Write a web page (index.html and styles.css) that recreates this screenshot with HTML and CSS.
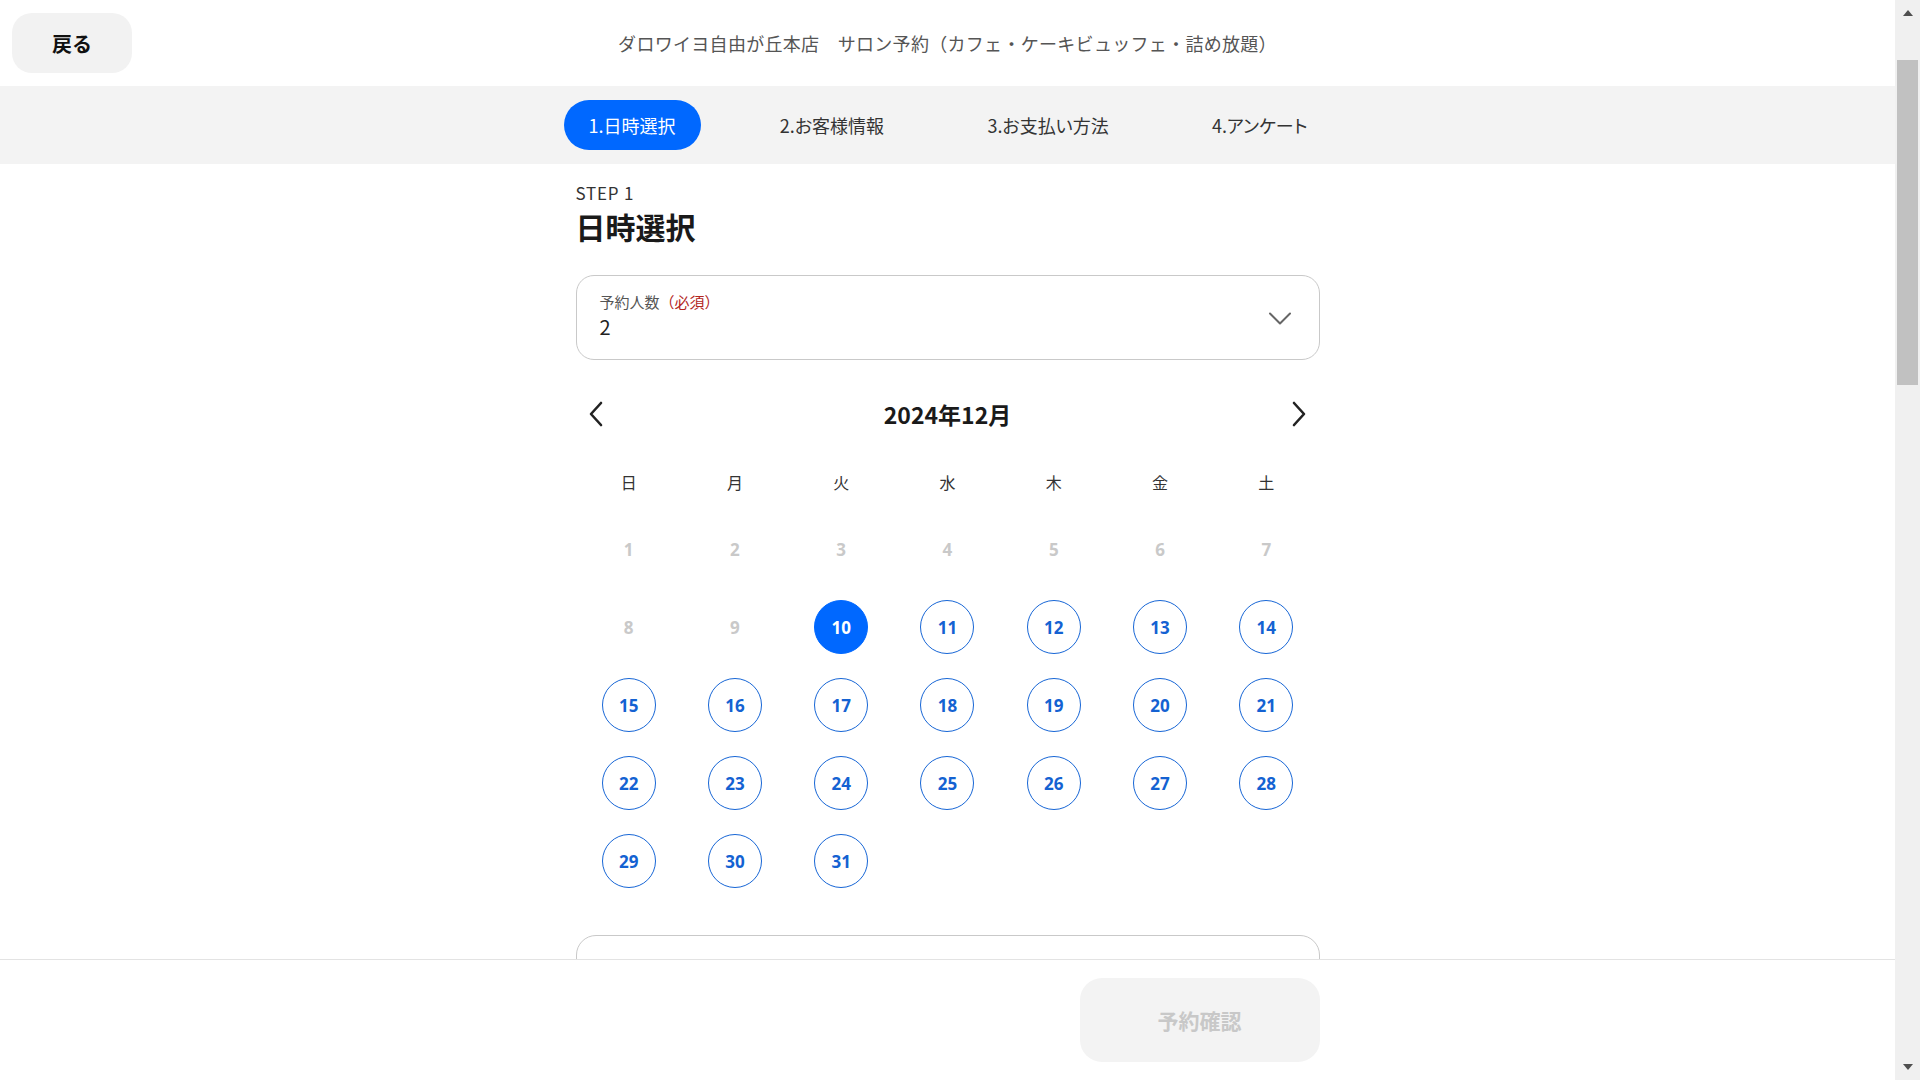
FILE: index.html
```html
<!DOCTYPE html>
<html lang="ja">
<head>
<meta charset="utf-8">
<title>サロン予約</title>
<link rel="stylesheet" href="styles.css">
</head>
<body>
<div class="app">
  <div class="page">
    <div class="scroll-area">
      <header class="topbar">
        <div class="topbar-left"><button class="back-btn" type="button">戻る</button></div>
        <h1 class="shop-title">ダロワイヨ自由が丘本店　サロン予約（カフェ・ケーキビュッフェ・詰め放題）</h1>
        <div class="topbar-right"></div>
      </header>

      <nav class="steps">
        <ol class="steps-list">
          <li class="step is-active">1.日時選択</li>
          <li class="step">2.お客様情報</li>
          <li class="step">3.お支払い方法</li>
          <li class="step">4.アンケート</li>
        </ol>
      </nav>

      <main class="content">
        <p class="step-no">STEP 1</p>
        <h2 class="step-title">日時選択</h2>

        <div class="field">
          <div class="field-body">
            <span class="field-label">予約人数<span class="req">（必須）</span></span>
            <span class="field-value">2</span>
          </div>
          <svg class="field-chevron" width="24" height="15" viewBox="0 0 24 15" aria-hidden="true">
            <path d="M2 2.5 L12 12.5 L22 2.5" fill="none" stroke="#666" stroke-width="2" stroke-linecap="round" stroke-linejoin="round"/>
          </svg>
        </div>

        <section class="calendar">
          <div class="cal-head">
            <button class="cal-nav" type="button" aria-label="前の月">
              <svg width="16" height="26" viewBox="0 0 16 26"><path d="M13 2 L3 13 L13 24" fill="none" stroke="#222" stroke-width="2.6" stroke-linecap="round" stroke-linejoin="round"/></svg>
            </button>
            <h3 class="cal-month">2024年12月</h3>
            <button class="cal-nav" type="button" aria-label="次の月">
              <svg width="16" height="26" viewBox="0 0 16 26"><path d="M3 2 L13 13 L3 24" fill="none" stroke="#222" stroke-width="2.6" stroke-linecap="round" stroke-linejoin="round"/></svg>
            </button>
          </div>
          <div class="cal-weekdays">
            <span>日</span><span>月</span><span>火</span><span>水</span><span>木</span><span>金</span><span>土</span>
          </div>
          <div class="cal-days">
            <span class="day is-disabled">1</span>
            <span class="day is-disabled">2</span>
            <span class="day is-disabled">3</span>
            <span class="day is-disabled">4</span>
            <span class="day is-disabled">5</span>
            <span class="day is-disabled">6</span>
            <span class="day is-disabled">7</span>
            <span class="day is-disabled">8</span>
            <span class="day is-disabled">9</span>
            <span class="day is-selected">10</span>
            <span class="day">11</span>
            <span class="day">12</span>
            <span class="day">13</span>
            <span class="day">14</span>
            <span class="day">15</span>
            <span class="day">16</span>
            <span class="day">17</span>
            <span class="day">18</span>
            <span class="day">19</span>
            <span class="day">20</span>
            <span class="day">21</span>
            <span class="day">22</span>
            <span class="day">23</span>
            <span class="day">24</span>
            <span class="day">25</span>
            <span class="day">26</span>
            <span class="day">27</span>
            <span class="day">28</span>
            <span class="day">29</span>
            <span class="day">30</span>
            <span class="day">31</span>
          </div>
        </section>

        <div class="panel"></div>
      </main>
    </div>

    <footer class="footer">
      <div class="footer-inner">
        <button class="confirm-btn" type="button" disabled>予約確認</button>
      </div>
    </footer>
  </div>

  <div class="scrollbar" aria-hidden="true">
    <div class="sb-btn sb-up"><span class="sb-arrow-up"></span></div>
    <div class="sb-track"><div class="sb-thumb"></div></div>
    <div class="sb-btn sb-down"><span class="sb-arrow-down"></span></div>
  </div>
</div>
</body>
</html>
```

FILE: styles.css
```css
* { box-sizing: border-box; }

body {
  margin: 0;
  font-family: "Noto Sans CJK JP", "Noto Sans", sans-serif;
  color: #222;
  background: #fff;
}

button { font-family: inherit; }

.app {
  display: flex;
  height: 100vh;
  overflow: hidden;
}
.page {
  flex: 1;
  min-width: 0;
  display: flex;
  flex-direction: column;
}
.scroll-area {
  flex: 1;
  min-height: 0;
  overflow: hidden;
}

/* scrollbar look-alike */
.scrollbar {
  width: 25px;
  flex: none;
  background: #f0f0f0;
  display: flex;
  flex-direction: column;
}
.sb-btn {
  height: 23px;
  display: flex;
  justify-content: center;
}
.sb-up { align-items: flex-start; padding-top: 10px; }
.sb-down { align-items: flex-end; padding-bottom: 10px; }
.sb-arrow-up {
  width: 0;
  height: 0;
  border-left: 5.5px solid transparent;
  border-right: 5.5px solid transparent;
  border-bottom: 6px solid #4f4f4f;
}
.sb-arrow-down {
  width: 0;
  height: 0;
  border-left: 5.5px solid transparent;
  border-right: 5.5px solid transparent;
  border-top: 6px solid #4f4f4f;
}
.sb-track {
  flex: 1;
  padding: 37px 2px 0;
}
.sb-thumb {
  height: 325px;
  background: #c1c1c1;
}

/* header */
.topbar {
  height: 86px;
  display: grid;
  grid-template-columns: 1fr auto 1fr;
  align-items: center;
  padding: 0 12px;
}
.back-btn {
  width: 120px;
  height: 60px;
  border: 0;
  border-radius: 20px;
  background: #f2f2f2;
  font-size: 20px;
  font-weight: 700;
  color: #111;
  cursor: pointer;
}
.shop-title {
  margin: 0;
  font-size: 18px;
  font-weight: 400;
  color: #555;
  letter-spacing: 0.3px;
}

/* steps */
.steps {
  height: 78px;
  background: #f3f3f3;
  display: flex;
  align-items: center;
  justify-content: center;
}
.steps-list {
  list-style: none;
  margin: 0;
  padding: 0;
  width: 768px;
  display: flex;
  justify-content: space-between;
}
.step {
  height: 50px;
  line-height: 50px;
  padding: 0 24px;
  border-radius: 25px;
  font-size: 18px;
  color: #333;
  font-feature-settings: "palt";
}
.step.is-active {
  background: #0068ff;
  color: #fff;
  padding: 0 25px;
}

/* content */
.content {
  width: 744px;
  margin: 0 auto;
  padding: 17px 0 160px;
}
.step-no {
  margin: 0;
  font-size: 17px;
  line-height: 24px;
  letter-spacing: 0.8px;
  color: #333;
}
.step-title {
  margin: 1px 0 0;
  font-size: 30px;
  line-height: 40px;
  font-weight: 700;
  color: #1a1a1a;
}

.field {
  margin-top: 29px;
  height: 85px;
  border: 1px solid #c9c9c9;
  border-radius: 18px;
  padding: 0 27px 2px 23px;
  display: flex;
  align-items: center;
  justify-content: space-between;
}
.field-body {
  display: flex;
  flex-direction: column;
}
.field-label {
  font-size: 15px;
  line-height: 20px;
  color: #555;
}
.req { color: #b3261e; }
.field-value {
  font-size: 20px;
  line-height: 30px;
  color: #222;
}
.field-chevron { margin-top: 4px; }

/* calendar */
.calendar { margin-top: 30px; }
.cal-head {
  height: 48px;
  display: flex;
  align-items: center;
  justify-content: space-between;
}
.cal-nav {
  width: 40px;
  height: 40px;
  border: 0;
  background: none;
  padding: 0;
  display: flex;
  align-items: center;
  justify-content: center;
  cursor: pointer;
}
.cal-month {
  margin: 0;
  font-size: 23px;
  font-weight: 700;
  color: #1a1a1a;
}
.cal-weekdays {
  margin-top: 24px;
  display: grid;
  grid-template-columns: repeat(7, 1fr);
  height: 40px;
  align-items: center;
  text-align: center;
  font-size: 16px;
  color: #333;
}
.cal-days {
  margin-top: 20px;
  display: grid;
  grid-template-columns: repeat(7, 1fr);
  row-gap: 24px;
  justify-items: center;
}
.day {
  width: 54px;
  height: 54px;
  border-radius: 50%;
  border: 1px solid #1766d6;
  display: flex;
  align-items: center;
  justify-content: center;
  font-family: "Open Sans", "Noto Sans", sans-serif;
  font-size: 17px;
  font-weight: 700;
  color: #1462d2;
}
.day.is-disabled {
  border-color: transparent;
  color: #c9c9c9;
}
.day.is-selected {
  background: #0068ff;
  border-color: #0068ff;
  color: #fff;
}

.panel {
  margin-top: 47px;
  height: 100px;
  border: 1px solid #c9c9c9;
  border-radius: 20px;
}

/* footer */
.footer {
  flex: none;
  height: 121px;
  background: #fff;
  border-top: 1px solid #e3e3e3;
}
.footer-inner {
  width: 744px;
  margin: 0 auto;
  padding-top: 18px;
  display: flex;
  justify-content: flex-end;
}
.confirm-btn {
  width: 240px;
  height: 84px;
  border: 0;
  border-radius: 22px;
  background: #f3f3f3;
  color: #c8c8c8;
  font-size: 21px;
  font-weight: 700;
}
```
